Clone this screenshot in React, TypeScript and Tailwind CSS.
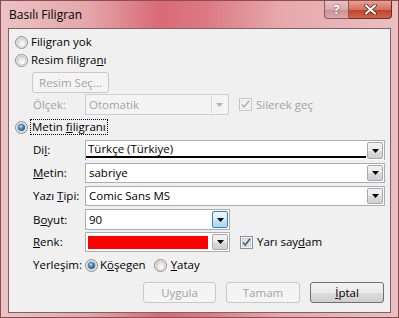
import React from "react";

function Radio({ checked }: { checked?: boolean }) {
  return (
    <svg width="13" height="13" viewBox="0 0 13 13" className="shrink-0">
      <defs>
        <radialGradient id="rg-off" cx="0.6" cy="0.7" r="0.7">
          <stop offset="0" stopColor="#ffffff" />
          <stop offset="1" stopColor="#d4d4d4" />
        </radialGradient>
        <radialGradient id="rg-on" cx="0.4" cy="0.35" r="0.7">
          <stop offset="0" stopColor="#bfe3f7" />
          <stop offset="0.5" stopColor="#3a8cc6" />
          <stop offset="1" stopColor="#1d4f7c" />
        </radialGradient>
      </defs>
      <circle cx="6.5" cy="6.5" r="6" fill="#f4f4f4" stroke="#8a8a8a" strokeWidth="1" />
      <circle cx="6.5" cy="6.5" r="4.5" fill="url(#rg-off)" stroke="#c2c2c2" strokeWidth="0.8" />
      {checked && <circle cx="6.5" cy="6.5" r="3.3" fill="url(#rg-on)" stroke="#2b5a86" strokeWidth="0.5" />}
    </svg>
  );
}

function Check({ disabled }: { disabled?: boolean }) {
  return (
    <svg width="13" height="13" viewBox="0 0 13 13" className="shrink-0">
      <rect x="0.5" y="0.5" width="12" height="12" fill={disabled ? "#f4f4f4" : "#f6f6f6"} stroke={disabled ? "#c6c6c6" : "#8e8f8f"} />
      <rect x="2.5" y="2.5" width="8" height="8" fill={disabled ? "#f4f4f4" : "#dfe2e6"} stroke={disabled ? "#e0e0e0" : "#b8bcc2"} strokeWidth="0.6" />
      <path d="M3 6.5 L5.3 9 L10 2.8" fill="none" stroke={disabled ? "#b5b5b5" : "#4b5d86"} strokeWidth="1.7" />
    </svg>
  );
}

function DropBtn({ hot, disabled }: { hot?: boolean; disabled?: boolean }) {
  return (
    <div
      className={
        hot
          ? "w-[16px] self-stretch m-[1px] flex items-center justify-center rounded-[2px] border border-[#3c7fb1] bg-[linear-gradient(#eaf6fd,#d9f0fc_50%,#bee6fd_51%,#a7d9f5)]"
          : disabled
          ? "w-[16px] self-stretch m-[1px] flex items-center justify-center border-l border-[#d9d9d9] bg-[#f4f4f4]"
          : "w-[16px] self-stretch m-[1px] flex items-center justify-center rounded-[2px] border border-[#a8a8a8] bg-[linear-gradient(#f2f2f2,#ebebeb_50%,#dddddd_51%,#cfcfcf)]"
      }
    >
      <svg width="7" height="4" viewBox="0 0 7 4">
        <path d="M0 0 H7 L3.5 4 Z" fill={disabled ? "#b0b0b0" : "#000"} />
      </svg>
    </div>
  );
}

function Label({ children }: { children: React.ReactNode }) {
  return <div className="w-[52px] shrink-0">{children}</div>;
}

function Btn({ children, disabled, w }: { children: React.ReactNode; disabled?: boolean; w: string }) {
  return (
    <div
      className={
        (disabled
          ? "text-[#a3a3a3] border-[#c9c9c9] bg-[#f4f4f4] "
          : "text-black border-[#707070] bg-[linear-gradient(#f2f2f2,#ebebeb_50%,#dddddd_51%,#cfcfcf)] ") +
        w +
        " h-[21px] border rounded-[3px] flex items-center justify-center"
      }
    >
      {children}
    </div>
  );
}

export default function App() {
  return (
    <div className="w-[399px] h-[318px] overflow-hidden font-['Segoe_UI','Open_Sans',sans-serif] text-[11.5px] text-black bg-[linear-gradient(90deg,#ebc3c4_0%,#e4a6aa_22%,#d96a76_40%,#dc7a84_52%,#e6a8ac_70%,#e9bfc0_100%)] border border-[#8d4b52] flex flex-col">
      {/* title bar */}
      <div className="h-[27px] flex items-start shrink-0">
        <div className="pl-[8px] pt-[5px] text-[12px] text-black">Basılı Filigran</div>
        <div className="ml-auto mr-[6px] flex">
          <div className="w-[25px] h-[18px] border border-[#8a5a5e] border-t-0 rounded-bl-[4px] bg-[linear-gradient(#e9c3c4,#d9a8ab_50%,#c98f94_51%,#d6a9ac)] flex items-center justify-center text-white text-[12px] font-bold [text-shadow:0_0_2px_#6b3a3f]">
            ?
          </div>
          <div className="w-[43px] h-[18px] border border-[#6e2a24] border-t-0 border-l-0 rounded-br-[4px] bg-[linear-gradient(#e8a193,#d4705e_50%,#c0402a_51%,#d0664f)] flex items-center justify-center">
            <svg width="13" height="11" viewBox="0 0 13 11">
              <path d="M2 1.5 L11 9.5 M11 1.5 L2 9.5" stroke="#4a1a14" strokeWidth="3.6" strokeLinecap="round" />
              <path d="M2 1.5 L11 9.5 M11 1.5 L2 9.5" stroke="#ffffff" strokeWidth="2.2" strokeLinecap="round" />
            </svg>
          </div>
        </div>
      </div>

      {/* client area */}
      <div className="ml-[7px] mr-[7px] h-[285px] border border-[#7c6366] bg-[#f0f0f0] flex flex-col pl-[6px] pr-[5px]">
        <div className="h-[18px] mt-[4px] flex items-center gap-[2px]">
          <Radio />
          <span className="ml-[1px]">Filigran yok</span>
        </div>
        <div className="h-[18px] flex items-center gap-[2px]">
          <Radio />
          <span className="ml-[1px]">
            Resim filigra<u>n</u>ı
          </span>
        </div>
        <div className="mt-[3px] ml-[17px]">
          <Btn disabled w="w-[77px]">
            Resim Seç...
          </Btn>
        </div>
        <div className="mt-[1px] ml-[18px] h-[21px] flex items-center text-[#a3a3a3]">
          <Label>Ölçek:</Label>
          <div className="w-[144px] h-full border border-[#cfcfcf] bg-[#f4f4f4] flex items-center">
            <span className="flex-1 pl-[3px]">Otomatik</span>
            <DropBtn disabled />
          </div>
          <div className="ml-[10px] flex items-center gap-[3px]">
            <Check disabled />
            <span className="ml-[1px]">Silerek geç</span>
          </div>
        </div>
        <div className="h-[18px] mt-[3px] flex items-center gap-[2px]">
          <Radio checked />
          <span className="px-[1px] border border-dotted border-black leading-[14px]">
            Metin <u>f</u>iligranı
          </span>
        </div>
        <div className="mt-[4px] ml-[18px] h-[20px] flex items-center">
          <Label>
            Di<u>l</u>:
          </Label>
          <div className="flex-1 h-full border border-[#abadb3] border-b-0 bg-white flex items-stretch">
            <div className="flex-1 flex flex-col">
              <span className="pl-[2px] leading-[14px] mt-[1px]">Türkçe (Türkiye)</span>
              <div className="mt-auto mb-[2px] h-[4px] border-t border-b border-black" />
            </div>
            <DropBtn />
          </div>
        </div>
        <div className="mt-[3px] ml-[18px] h-[20px] flex items-center">
          <Label>
            <u>M</u>etin:
          </Label>
          <div className="flex-1 h-full border border-[#abadb3] bg-white flex items-center">
            <span className="flex-1 pl-[3px]">sabriye</span>
            <DropBtn />
          </div>
        </div>
        <div className="mt-[3px] ml-[18px] h-[20px] flex items-center">
          <Label>
            Yazı <u>T</u>ipi:
          </Label>
          <div className="flex-1 h-full border border-[#abadb3] bg-white flex items-center">
            <span className="flex-1 pl-[3px]">Comic Sans MS</span>
            <DropBtn />
          </div>
        </div>
        <div className="mt-[3px] ml-[18px] h-[21px] flex items-center">
          <Label>
            B<u>o</u>yut:
          </Label>
          <div className="w-[145px] h-full border border-[#abadb3] bg-white flex items-center">
            <span className="flex-1 pl-[3px]">90</span>
            <DropBtn hot />
          </div>
        </div>
        <div className="mt-[2px] ml-[18px] h-[20px] flex items-center">
          <Label>
            <u>R</u>enk:
          </Label>
          <div className="w-[145px] h-full border border-[#abadb3] bg-white flex items-center">
            <div className="flex-1 h-[13px] ml-[2px] mr-[3px] bg-[#ff0000]" />
            <DropBtn />
          </div>
          <div className="ml-[10px] flex items-center gap-[3px]">
            <Check />
            <span className="ml-[1px]">
              Yarı say<u>d</u>am
            </span>
          </div>
        </div>
        <div className="mt-[4px] ml-[18px] h-[18px] flex items-center">
          <Label>Yerleşim:</Label>
          <Radio checked />
          <span className="ml-[2px]">
            K<u>ö</u>şegen
          </span>
          <div className="ml-[8px] flex items-center">
            <Radio />
            <span className="ml-[4px]">
              <u>Y</u>atay
            </span>
          </div>
        </div>
        <div className="mt-[8px] flex justify-end gap-[10px] pr-[1px]">
          <Btn disabled w="w-[73px]">
            Uygula
          </Btn>
          <Btn disabled w="w-[74px]">
            Tamam
          </Btn>
          <Btn w="w-[74px]">
            <u>İ</u>ptal
          </Btn>
        </div>
      </div>
    </div>
  );
}
